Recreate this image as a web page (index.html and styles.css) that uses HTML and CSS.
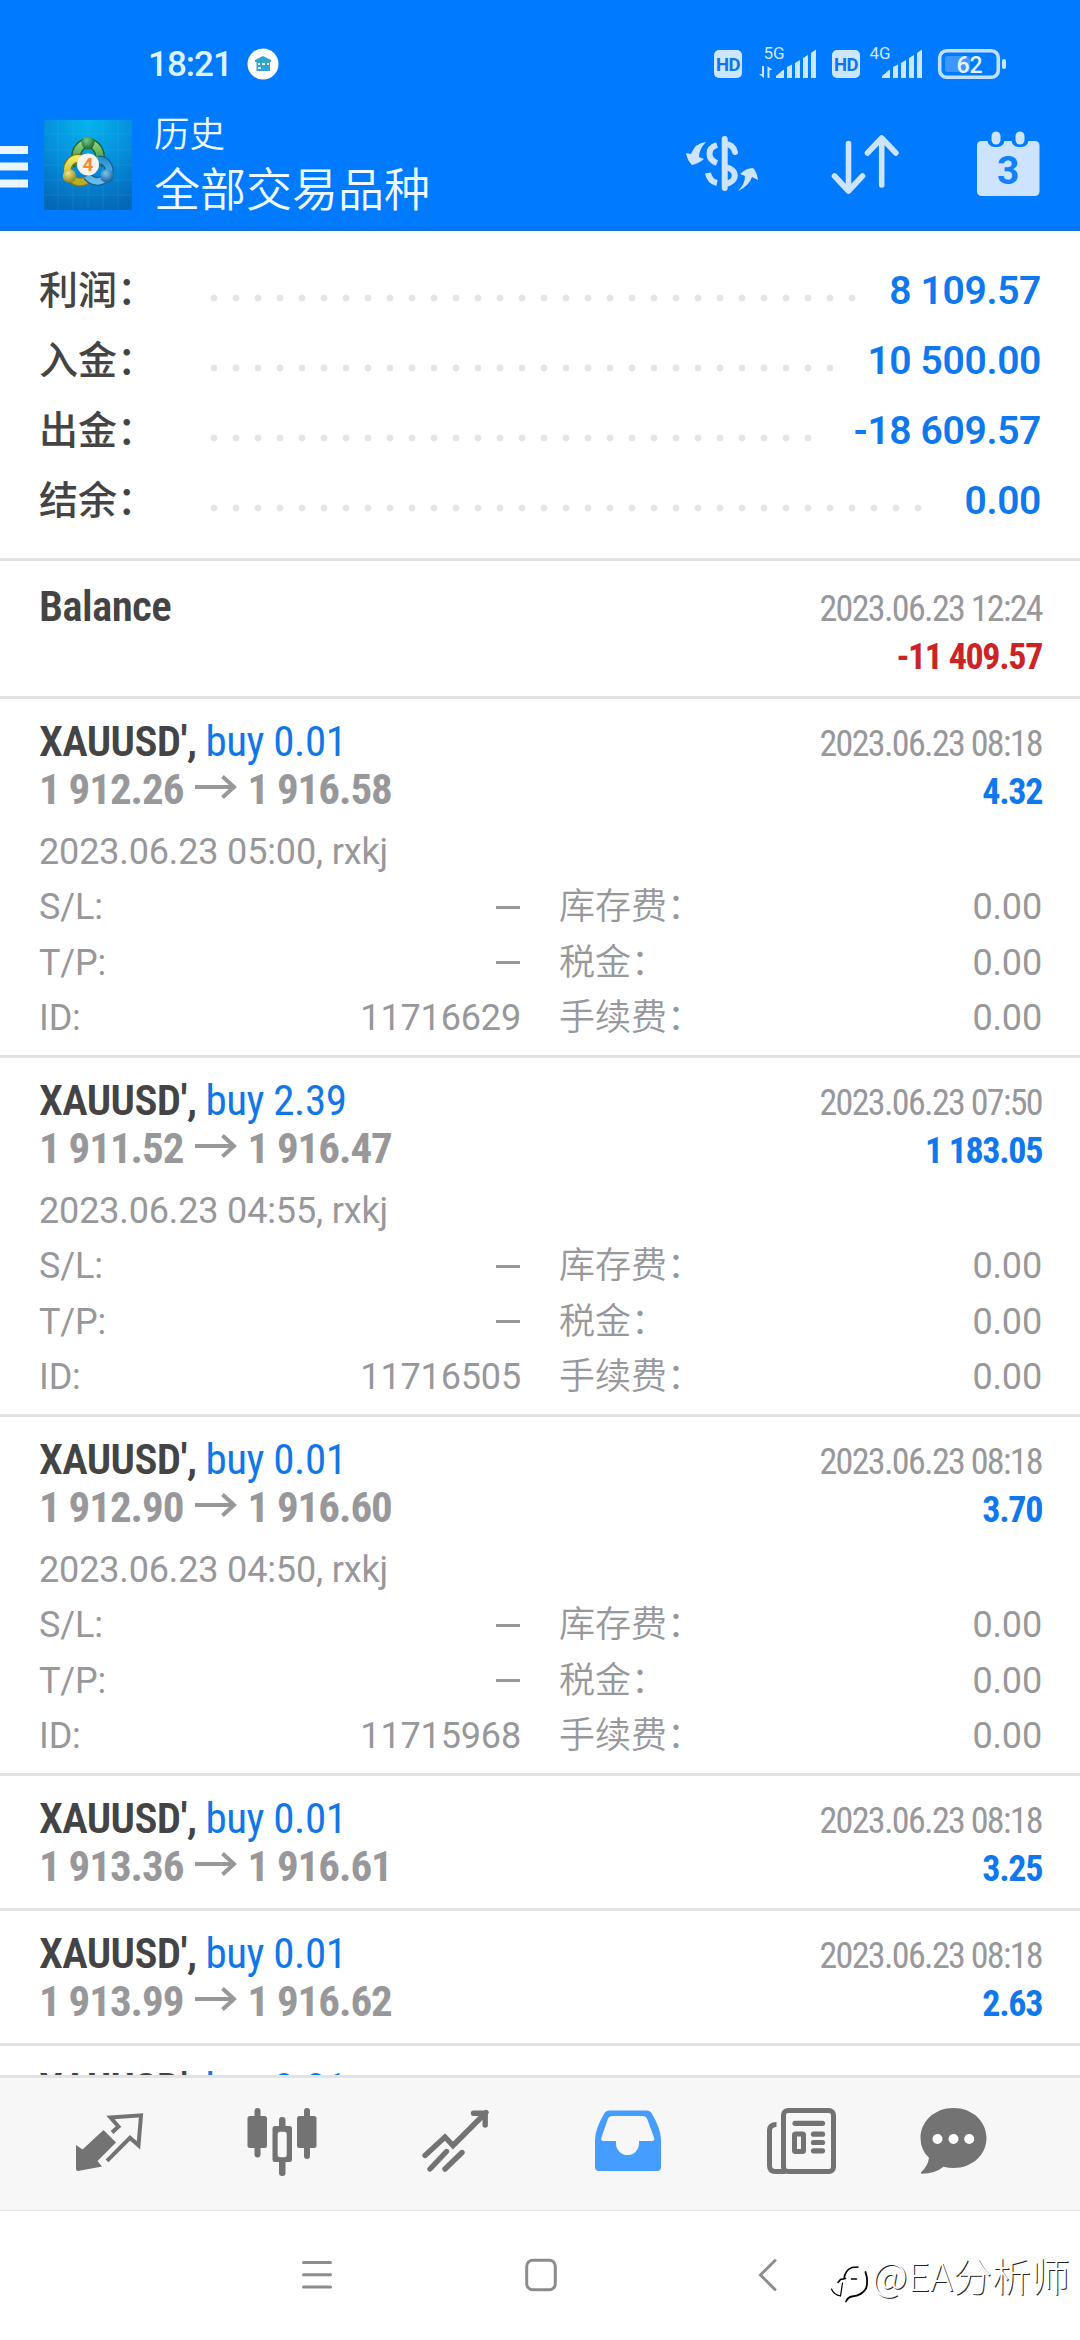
FILE: index.html
```html
<!DOCTYPE html>
<html lang="zh-CN">
<head>
<meta charset="utf-8">
<title>历史</title>
<link rel="stylesheet" href="styles.css">
</head>
<body>
<header class="header">
  <div class="status">
    <span class="clock">18:21</span>
    <svg class="badge" viewBox="0 0 32 32"><circle cx="16" cy="16" r="15.5" fill="#fff"/><path d="M16 8l8 4v2H8v-2zM9.500 14h13.500v9H9.500z" fill="#2fa4cf"/><path d="M11 15h2v2h-2zM15 15h3v2h-3zM20 15h2v2h-2zM11 19h3v2h-3z" fill="#e8f7fc"/></svg>
    <svg class="signals" viewBox="710 40 300 44">
      <g fill="#cde6ff">
        <rect x="714" y="50" width="28" height="28" rx="5"/>
        <rect x="832" y="50" width="28" height="28" rx="5"/>
        <path d="M776 78v-2l7-6h1v8zM787 78V67l5-2.500V78zM795 78V63l5-3v18zM803 78V58l5-3v23zM811 78V53l5-3.500V78z"/>
        <path d="M882 78v-2l7-6h1v8zM893 78V67l5-2.500V78zM901 78V63l5-3v18zM909 78V58l5-3v23zM917 78V53l5-3.500V78z"/>
        <path d="M762 66h2v12l-5-4h3zM767.500 78V66l5 4h-3v8z"/>
        <rect x="1002" y="59" width="4" height="10" rx="2"/>
      </g>
      <rect x="939.700" y="50.700" width="58.600" height="26.600" rx="7" fill="none" stroke="#bfe0ff" stroke-width="3.600"/>
      <rect x="945" y="56" width="25" height="16" rx="3" fill="#3d97ff"/>
      <g class="sig-text">
        <text x="728" y="71" class="hd">HD</text>
        <text x="846" y="71" class="hd">HD</text>
        <text x="774" y="59" class="net">5G</text>
        <text x="880" y="59" class="net">4G</text>
        <text x="969.500" y="73" class="pct">62</text>
      </g>
    </svg>
  </div>
  <div class="bar">
    <svg class="menu" viewBox="0 0 28 42"><path d="M0 0h28v8H0zM0 16.500h28v8H0zM0 33.500h28v8H0z" fill="#eaf6ff"/></svg>
    <svg class="logo" viewBox="0 0 88 90">
      <defs>
        <radialGradient id="bg" cx=".5" cy=".02" r="1"><stop offset="0" stop-color="#06b4ee"/><stop offset=".5" stop-color="#0490dc"/><stop offset="1" stop-color="#0468b8"/></radialGradient>
        <linearGradient id="gr" x2="0" y2="1"><stop offset="0" stop-color="#8fd07a"/><stop offset="1" stop-color="#2c8a3e"/></linearGradient>
        <linearGradient id="ye" x2="0" y2="1"><stop offset="0" stop-color="#f0e860"/><stop offset="1" stop-color="#b9ab25"/></linearGradient>
        <linearGradient id="bl" x2="0" y2="1"><stop offset="0" stop-color="#2d92d2"/><stop offset="1" stop-color="#67bdea"/></linearGradient>
        <radialGradient id="gb" cx=".4" cy=".3" r=".7"><stop offset="0" stop-color="#7cc98a"/><stop offset="1" stop-color="#176a2a"/></radialGradient>
        <radialGradient id="yb" cx=".4" cy=".3" r=".7"><stop offset="0" stop-color="#efe58a"/><stop offset="1" stop-color="#8d8418"/></radialGradient>
        <radialGradient id="bb" cx=".4" cy=".3" r=".7"><stop offset="0" stop-color="#7cc4ee"/><stop offset="1" stop-color="#125f9f"/></radialGradient>
      </defs>
      <rect width="88" height="90" fill="url(#bg)"/>
      <path d="M14 0v90M29 0v90M44 0v90M59 0v90M74 0v90M0 14h88M0 30h88M0 45h88M0 60h88M0 75h88" stroke="#6ccdf5" stroke-opacity=".14"/>
      <g fill="none">
        <path d="M34 45a12 14 0 1 1 20 0" stroke="#17652c" stroke-width="10"/>
        <path d="M34 45a12 14 0 1 1 20 0" stroke="url(#gr)" stroke-width="7"/>
        <path d="M38 39C28 36 20 46 25 56c4 6 12 8 18 4" stroke="#7a7518" stroke-width="9"/>
        <path d="M38 39C28 36 20 46 25 56c4 6 12 8 18 4" stroke="url(#ye)" stroke-width="6.500"/>
        <path d="M54 40c10 0 14 10 9 17-6 6-14 6-20-1" stroke="#145f97" stroke-width="9"/>
        <path d="M54 40c10 0 14 10 9 17-6 6-14 6-20-1" stroke="url(#bl)" stroke-width="6.500"/>
      </g>
      <circle cx="44" cy="23" r="6.500" fill="url(#gb)"/>
      <circle cx="25.500" cy="56" r="6.800" fill="url(#yb)"/>
      <circle cx="63" cy="56" r="6.800" fill="url(#bb)"/>
      <circle cx="44" cy="44.500" r="11" fill="#f6f4f1"/>
      <text x="44" y="51" class="four">4</text>
    </svg>
    <div class="titles">
      <div class="sub">历史</div>
      <div class="main">全部交易品种</div>
    </div>
    <div class="actions">
      <svg width="84" height="70" viewBox="680 130 84 70">
        <g fill="none" stroke="#cce4ff" stroke-width="6">
          <path d="M724.700 139v49" stroke-linecap="round"/>
          <path d="M717 145c-10 3-10 14 0 18"/>
          <path d="M708 173c1 5 4 9 9 10"/>
          <path d="M725 144c5 0 9 3 10 8" stroke-linecap="round"/>
          <path d="M725 167c13 2 13 15 0 17"/>
        </g>
        <path d="M706 142Q695 143 691 154L686 153Q687 160 692 165Q698 164 704 159L699 157Q699 149 706 142zM738 191Q749 186 752 177L758 180Q757 172 753 168Q746 168 740 174L745 176Q745 184 738 191z" fill="#cce4ff"/>
      </svg>
      <svg width="80" height="70" viewBox="825 130 80 70"><path d="M848.500 143.500v47M834.500 176l14 15 14-15M881.700 185v-46M867.500 153l14.200-15 14.200 15" fill="none" stroke="#cce4ff" stroke-width="5.600" stroke-linecap="round" stroke-linejoin="round"/></svg>
      <svg width="75" height="70" viewBox="970 130 75 70">
        <rect x="977" y="141" width="62.500" height="55" rx="4.500" fill="#cce4ff"/>
        <rect x="987.500" y="127" width="17" height="20" rx="7" fill="#007aff"/><rect x="1011.500" y="127" width="17" height="20" rx="7" fill="#007aff"/>
        <rect x="991.500" y="131.500" width="9" height="13" rx="4.500" fill="#cce4ff"/><rect x="1015.500" y="131.500" width="9" height="13" rx="4.500" fill="#cce4ff"/>
        <text x="1008.300" y="184.300" class="day">3</text>
      </svg>
    </div>
  </div>
</header>

<main class="content">
  <section class="summary">
    <div class="total"><span class="label">利润：</span><i class="dots"></i><b>8 109.57</b></div>
    <div class="total"><span class="label">入金：</span><i class="dots"></i><b>10 500.00</b></div>
    <div class="total"><span class="label">出金：</span><i class="dots"></i><b>-18 609.57</b></div>
    <div class="total"><span class="label">结余：</span><i class="dots"></i><b>0.00</b></div>
  </section>

  <article class="deal balance">
    <div class="line"><span class="name">Balance</span><span class="date">2023.06.23 12:24</span></div>
    <div class="line"><span class="price">&nbsp;</span><span class="result loss">-11 409.57</span></div>
  </article>

  <article class="deal open">
    <div class="line"><span class="name">XAUUSD', <em>buy 0.01</em></span><span class="date">2023.06.23 08:18</span></div>
    <div class="line"><span class="price">1 912.26<svg class="arrow" viewBox="0 0 42 24"><path d="M0 12h39M27.500 1.500L39 12 27.500 22.500"/></svg>1 916.58</span><span class="result">4.32</span></div>
    <div class="details">
      <div class="wide">2023.06.23 05:00, rxkj</div>
      <div><span>S/L:</span><i class="none"></i></div><div><span class="fee">库存费：</span><span>0.00</span></div>
      <div><span>T/P:</span><i class="none"></i></div><div><span class="fee">税金：</span><span>0.00</span></div>
      <div><span>ID:</span><span>11716629</span></div><div><span class="fee">手续费：</span><span>0.00</span></div>
    </div>
  </article>

  <article class="deal open">
    <div class="line"><span class="name">XAUUSD', <em>buy 2.39</em></span><span class="date">2023.06.23 07:50</span></div>
    <div class="line"><span class="price">1 911.52<svg class="arrow" viewBox="0 0 42 24"><path d="M0 12h39M27.500 1.500L39 12 27.500 22.500"/></svg>1 916.47</span><span class="result">1 183.05</span></div>
    <div class="details">
      <div class="wide">2023.06.23 04:55, rxkj</div>
      <div><span>S/L:</span><i class="none"></i></div><div><span class="fee">库存费：</span><span>0.00</span></div>
      <div><span>T/P:</span><i class="none"></i></div><div><span class="fee">税金：</span><span>0.00</span></div>
      <div><span>ID:</span><span>11716505</span></div><div><span class="fee">手续费：</span><span>0.00</span></div>
    </div>
  </article>

  <article class="deal open">
    <div class="line"><span class="name">XAUUSD', <em>buy 0.01</em></span><span class="date">2023.06.23 08:18</span></div>
    <div class="line"><span class="price">1 912.90<svg class="arrow" viewBox="0 0 42 24"><path d="M0 12h39M27.500 1.500L39 12 27.500 22.500"/></svg>1 916.60</span><span class="result">3.70</span></div>
    <div class="details">
      <div class="wide">2023.06.23 04:50, rxkj</div>
      <div><span>S/L:</span><i class="none"></i></div><div><span class="fee">库存费：</span><span>0.00</span></div>
      <div><span>T/P:</span><i class="none"></i></div><div><span class="fee">税金：</span><span>0.00</span></div>
      <div><span>ID:</span><span>11715968</span></div><div><span class="fee">手续费：</span><span>0.00</span></div>
    </div>
  </article>

  <article class="deal">
    <div class="line"><span class="name">XAUUSD', <em>buy 0.01</em></span><span class="date">2023.06.23 08:18</span></div>
    <div class="line"><span class="price">1 913.36<svg class="arrow" viewBox="0 0 42 24"><path d="M0 12h39M27.500 1.500L39 12 27.500 22.500"/></svg>1 916.61</span><span class="result">3.25</span></div>
  </article>

  <article class="deal">
    <div class="line"><span class="name">XAUUSD', <em>buy 0.01</em></span><span class="date">2023.06.23 08:18</span></div>
    <div class="line"><span class="price">1 913.99<svg class="arrow" viewBox="0 0 42 24"><path d="M0 12h39M27.500 1.500L39 12 27.500 22.500"/></svg>1 916.62</span><span class="result">2.63</span></div>
  </article>

  <article class="deal">
    <div class="line"><span class="name">XAUUSD', <em>buy 0.01</em></span></div>
  </article>
</main>

<nav class="tabs">
  <svg viewBox="68 2100 80 80">
    <path d="M102.500 2130l12.500 12.500-18.500 18.500 4.500 5.500-24 4.500q-2 0-2-2v-24l6.500 4.500z" fill="#737373"/>
    <path d="M111 2132.500l6.500-6-8-9L140 2115.300l-2.500 30-8.500-7.500-23 23" class="stroke" stroke-width="4"/>
  </svg>
  <svg viewBox="241 2100 80 80">
    <g fill="#737373"><rect x="246.500" y="2116" width="19.500" height="32" rx="2.500"/><rect x="253.500" y="2108" width="6" height="49.500" rx="3"/>
    <rect x="296" y="2116" width="19.500" height="32" rx="2.500"/><rect x="303" y="2108" width="6" height="51" rx="3"/>
    <rect x="271.500" y="2126" width="19.500" height="36" rx="2.500"/><rect x="278" y="2117" width="6.500" height="59" rx="3"/></g>
    <rect x="276.700" y="2131.700" width="9" height="25.600" rx="2.500" fill="#f7f7f7"/>
  </svg>
  <svg viewBox="414 2100 80 80"><path d="M424 2155.500l20-18.500 8 8.500 33-33M472.500 2113.300h11.700V2125M429 2169l16.500-17.500M444 2169l17-16.500" class="stroke" stroke-width="5.400" stroke-linecap="round"/></svg>
  <svg viewBox="587.500 2100 80 80"><path fill-rule="evenodd" d="M608.500 2110.500h38q3 0 4.500 2.500 9.500 16 9.500 27v27q0 4-4 4h-58q-4 0-4-4v-27q0-11 9.500-27 1.500-2.500 4.500-2.500zM611.500 2116q-3 0-4 2.500l-6.500 19q-1 3.500 2 3.500h12.500v2.500a11.500 11.500 0 0 0 23 0v-2.500h13q3 0 2-3.500l-7-19q-1-2.500-4-2.500z" fill="#459dff"/></svg>
  <svg viewBox="760.500 2100 80 80">
    <rect x="783" y="2110.500" width="50" height="61" rx="4.500" class="stroke" stroke-width="5"/>
    <path d="M776 2124.500q-7 0-7 6v35q0 6 6 6h10" class="stroke" stroke-width="5"/>
    <path d="M794.500 2123.300h27.500M813 2134.200h9M813 2142.500h9M813 2150.800h9" class="stroke" stroke-width="5.200" stroke-linecap="round"/>
    <rect x="794" y="2134" width="9" height="17.500" rx="1" class="stroke" stroke-width="5"/>
  </svg>
  <svg viewBox="912.500 2100 80 80"><path d="M953 2108c19 0 33 13.500 33 30s-14 30-33 30q-5 0-10-1.200-8 6.700-21.500 7-2 0-.5-2 6.500-6 7.500-14-8.500-8-8.500-19.800c0-16.500 14-30 33-30z" fill="#737373"/><g fill="#fff"><circle cx="937" cy="2139" r="5"/><circle cx="953" cy="2139" r="5"/><circle cx="968.700" cy="2139" r="5"/></g></svg>
</nav>

<footer class="system">
  <svg viewBox="0 0 40 40"><path d="M6.500 7.500h27M6.500 19.700h27M6.500 32h27"/></svg>
  <svg viewBox="0 0 40 40"><rect x="5.700" y="5.200" width="28.600" height="29.600" rx="6"/></svg>
  <svg viewBox="0 0 40 40"><path d="M30 5.500L15.500 20 30 34.500"/></svg>
</footer>

<div class="mark">
  <svg viewBox="0 0 40 44"><g fill="none" stroke="#000" stroke-linecap="round"><path d="M8 16.500l2.500-3 5-1M14 13q1-9 8-11.500l6-.5" stroke-width="1.600"/><path d="M21.500 13h5" stroke-width="1.600"/><path d="M35.500 6q3 9 .5 16.500-4 7-14 8-4 .5-6 5" stroke-width="1.800"/><path d="M12.500 17l-2 13Q4 29 1.500 23" stroke-width="1.200"/></g></svg>
  <span>@EA分析师</span>
</div>
</body>
</html>
```
FILE: styles.css
```css
* { box-sizing: border-box; }

body {
  position: relative;
  display: flex;
  flex-direction: column;
  width: 1080px;
  height: 2340px;
  margin: 0;
  overflow: hidden;
  background: #fff;
  color: #444;
  font-family: Roboto, "Noto Sans CJK SC", sans-serif;
}

svg { display: block; flex: none; }
em, i { font-style: normal; }

/* header */
.header {
  flex: none;
  height: 231px;
  background: #007aff;
  border-bottom: 2px solid #1a6fcf;
}

.status {
  display: flex;
  align-items: center;
  height: 110px;
  padding: 18px 70px 0 148px;
}

.clock {
  width: 99px;
  margin-top: 2px;
  color: #dcf2ff;
  font-size: 35px;
  font-weight: 500;
  letter-spacing: -1px;
  line-height: 40px;
}

.badge { width: 32px; height: 32px; }
.signals { width: 300px; height: 44px; margin: -4px 0 0 auto; }
.sig-text { text-anchor: middle; font-weight: 500; }
.hd { fill: #1274e8; font-size: 18.5px; font-weight: 700; letter-spacing: -.5px; }
.net { fill: #cfe8ff; font-size: 17px; font-weight: 400; }
.pct { fill: #e4f6ff; font-size: 23px; }

.bar {
  display: flex;
  align-items: flex-start;
  height: 119px;
  padding-right: 35px;
}

.menu { width: 28px; height: 42px; margin: 36px 16px 0 0; }
.logo { width: 88px; height: 90px; margin: 10px 22px 0 0; }
.four { fill: #f28a35; font-size: 19px; font-weight: 700; text-anchor: middle; }
.titles { color: #effaff; font-weight: 350; }
.sub { height: 50px; font-size: 35.5px; line-height: 50px; }
.main { margin-top: -1px; font-size: 46px; line-height: 62px; }

.actions { display: flex; margin: 20px 0 0 auto; }
.actions svg:nth-child(2) { margin: 0 65px 0 61px; }
.day { fill: #1180fb; font-size: 39px; font-weight: 700; text-anchor: middle; }

/* content */
.content { height: 1844px; overflow: hidden; }

.summary { height: 327px; padding: 25px 39px 0 39px; }

.total {
  display: flex;
  height: 70px;
  font-size: 39px;
  line-height: 70px;
}

.label { width: 163.5px; font-weight: 500; }
.total b { color: #0f78ec; font-weight: 650; letter-spacing: -.35px; }

.dots {
  flex: 1;
  height: 8px;
  margin: 37.5px 29px 0 0;
  background: radial-gradient(circle at 11px 4px, #e5e5e5 3px, transparent 3.900px) 0 0 / 22px 8px repeat-x;
}

.deal {
  padding: 18px 38px 18px 39px;
  border-top: 3px solid #e3e3e3;
  font-family: "Roboto Condensed", Roboto, "Noto Sans CJK SC", sans-serif;
}

.balance { padding-top: 21px; }
.open { padding-bottom: 8.5px; }

.line {
  display: flex;
  justify-content: space-between;
  align-items: baseline;
  height: 48px;
  line-height: 48px;
}

.name { font-size: 43px; font-weight: 600; letter-spacing: -.65px; }
.name em { color: #1277e6; font-weight: 400; letter-spacing: -.5px; }
.price { color: #98989b; font-size: 43px; font-weight: 700; letter-spacing: -1.05px; }
.date { color: #98989b; font-size: 36px; letter-spacing: -1.65px; }
.result { color: #0f78ec; font-size: 36px; font-weight: 700; letter-spacing: -1.35px; }
.loss { color: #cb2427; }

.arrow {
  display: inline-block;
  width: 42px;
  height: 24px;
  margin: 0 10px 0 12px;
  vertical-align: 5px;
  fill: none;
  stroke: #98989b;
  stroke-width: 4;
}

.details {
  display: grid;
  grid-template-columns: 482px 1fr;
  column-gap: 38px;
  grid-auto-rows: 55.5px;
  margin-top: 11.5px;
  color: #98989b;
  font-family: Roboto, "Noto Sans CJK SC", sans-serif;
  font-size: 36px;
  font-weight: 380;
  letter-spacing: -.15px;
  line-height: 55.5px;
}

.details div { display: flex; justify-content: space-between; }
.details .wide { grid-column: 1 / -1; }
.fee { font-weight: 350; letter-spacing: 0; }

.none { width: 24px; height: 3px; margin: 25.5px 1px 0 0; background: #98989b; }

/* bottom bars */
.tabs {
  display: grid;
  flex: none;
  grid-template-columns: repeat(5, 173.200px) 1fr;
  justify-items: center;
  height: 136px;
  padding: 22px 61px 0 22px;
  border-top: 3px solid #e3e3e3;
  border-bottom: 1px solid #e0e0e0;
  background: #f7f7f7;
}

.tabs svg { width: 80px; height: 80px; }
.stroke { fill: none; stroke: #737373; }

.system {
  display: flex;
  gap: 184px;
  padding: 44px 0 0 297px;
}

.system svg {
  width: 40px;
  height: 40px;
  fill: none;
  stroke: #8c8c8c;
  stroke-width: 3;
  stroke-linecap: round;
}

/* watermark over the system bar */
.mark {
  position: absolute;
  left: 830px;
  top: 2252px;
  display: flex;
  align-items: flex-start;
  color: #fff;
  font: 300 39px/44px "Noto Sans CJK SC", sans-serif;
  text-shadow: 1px 1px 0 #222;
}

.mark svg { width: 40px; height: 44px; margin: 14px 2px 0 0; }
```
